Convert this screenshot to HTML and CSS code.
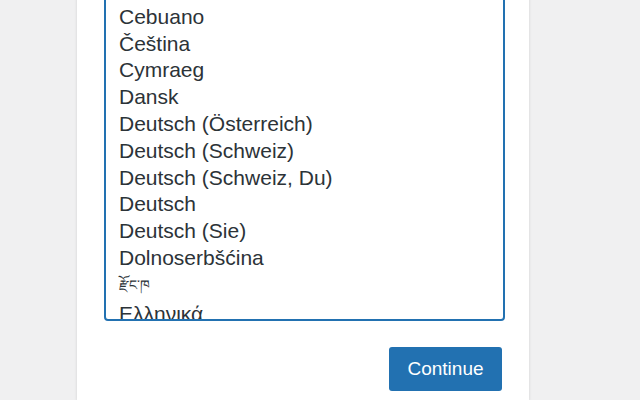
FILE: index.html
```html
<!DOCTYPE html>
<html lang="en">
<head>
<meta charset="utf-8">
<title>WordPress › Installation</title>
<link rel="stylesheet" href="styles.css">
</head>
<body>
<div class="card">
  <div class="list" role="listbox">
    <div class="opt">Cebuano</div>
    <div class="opt">Čeština</div>
    <div class="opt">Cymraeg</div>
    <div class="opt">Dansk</div>
    <div class="opt">Deutsch (Österreich)</div>
    <div class="opt">Deutsch (Schweiz)</div>
    <div class="opt">Deutsch (Schweiz, Du)</div>
    <div class="opt">Deutsch</div>
    <div class="opt">Deutsch (Sie)</div>
    <div class="opt">Dolnoserbšćina</div>
    <div class="opt tib">རྫོང་ཁ</div>
    <div class="opt">Ελληνικά</div>
  </div>
  <div class="actions">
    <button class="btn" type="button">Continue</button>
  </div>
</div>
</body>
</html>
```
FILE: styles.css
```css
html, body {
  margin: 0;
  padding: 0;
}
body {
  background: #f0f0f1;
  font-family: "Liberation Sans", Arial, sans-serif;
  color: #2c3338;
  height: 400px;
  overflow: hidden;
}
.card {
  box-sizing: border-box;
  width: 452px;
  margin: -20px 0 0 77px;
  padding: 0 24px 0 27px;
  height: 420px;
  background: #fff;
  box-shadow: 0 1px 3px rgba(0, 0, 0, 0.13);
}
.list {
  box-sizing: border-box;
  height: 341px;
  border: 2px solid #2271b1;
  border-radius: 4px;
  overflow: hidden;
  padding: 21.8px 0 0 13px;
}
.opt {
  font-size: 21px;
  line-height: 26.8px;
  height: 26.8px;
  white-space: nowrap;
}
.tib {
  font-size: 14px;
  height: 29.5px;
}
.actions {
  display: flex;
  justify-content: flex-end;
  padding: 26px 3px 0 0;
}
.btn {
  box-sizing: border-box;
  height: 44px;
  width: 113px;
  padding: 0;
  border: 0;
  border-radius: 3px;
  background: #2271b1;
  color: #fff;
  font-family: "Liberation Sans", Arial, sans-serif;
  font-size: 19px;
}
```
